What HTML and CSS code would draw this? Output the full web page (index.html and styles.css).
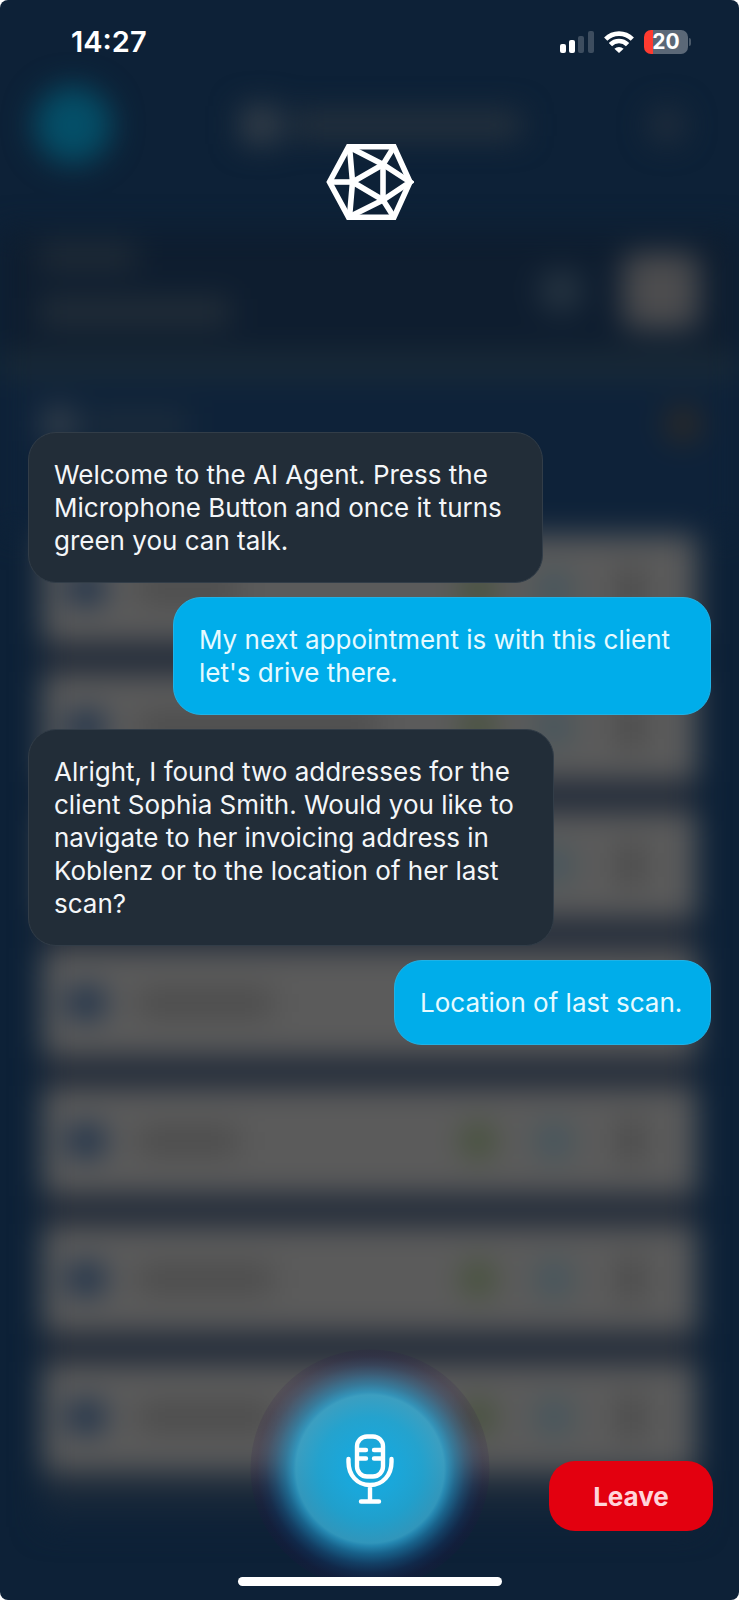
FILE: index.html
```html
<!DOCTYPE html>
<html lang="en">
<head>
<meta charset="utf-8">
<meta name="viewport" content="width=device-width, initial-scale=1">
<title>AI Agent</title>
<link rel="stylesheet" href="styles.css">
</head>
<body>
<div class="screen">
  <div class="backdrop" aria-hidden="true">
    <div class="backdrop-content">
      <div class="bg-header"><i class="bg-back"></i><div class="bg-title"><i></i><b></b></div><i class="bg-menu"></i></div>
      <div class="bg-client"><div class="bg-lines"><i></i><b></b></div><i class="bg-call"></i><i class="bg-tile"></i></div>
      <div class="bg-strip"></div>
      <div class="bg-tabs"><i class="bg-tab-icon"></i><i class="bg-tab-name"></i><i class="bg-badge"></i></div>
      <div class="bg-list">
        <div class="bg-card"><i class="doc"></i><i class="name"></i><i class="green"></i><i class="cyan"></i><i class="more"></i></div>
        <div class="bg-card"><i class="doc"></i><i class="name name-long"></i><i class="green"></i><i class="cyan"></i><i class="more"></i></div>
        <div class="bg-card"><i class="doc"></i><i class="name"></i><i class="green"></i><i class="cyan"></i><i class="more"></i></div>
        <div class="bg-card"><i class="doc"></i><i class="name name-mid"></i><i class="green"></i><i class="cyan"></i><i class="more"></i></div>
        <div class="bg-card"><i class="doc"></i><i class="name"></i><i class="green"></i><i class="cyan"></i><i class="more"></i></div>
        <div class="bg-card"><i class="doc"></i><i class="name name-mid"></i><i class="green"></i><i class="cyan"></i><i class="more"></i></div>
        <div class="bg-card"><i class="doc"></i><i class="name name-mid"></i><i class="green"></i><i class="cyan"></i><i class="more"></i></div>
      </div>
      <div class="bg-tail"></div>
    </div>
  </div>

  <header class="status-bar">
    <time class="clock">14:27</time>
    <div class="indicators">
      <svg class="signal" viewBox="0 0 34 22" role="img" aria-label="Signal: two of four bars">
        <rect x="0" y="13" width="6" height="9" rx="2" fill="#fff"/>
        <rect x="9" y="9" width="6" height="13" rx="2" fill="#fff"/>
        <rect x="18" y="5" width="6" height="17" rx="2" fill="#3d4d5f"/>
        <rect x="28" y="0" width="6" height="22" rx="2" fill="#3d4d5f"/>
      </svg>
      <svg class="wifi" viewBox="0 0 30 22" role="img" aria-label="Wi-Fi">
        <g fill="none" stroke="#fff" stroke-width="4.6">
          <path d="M1.7 8.1a19 19 0 0 1 26.6 0"/>
          <path d="M6.4 13.6a12 12 0 0 1 17.2 0"/>
        </g>
        <path d="M10.4 17.8a6.600 6.600 0 0 1 9.2 0L15 22z" fill="#fff"/>
      </svg>
      <div class="battery"><span class="battery-body">20</span><span class="battery-nub"></span></div>
    </div>
  </header>

  <svg class="logo" viewBox="0 0 88 76" role="img" aria-label="AI Agent logo">
    <g fill="none" stroke="#fff" stroke-width="5.600" stroke-linejoin="miter">
      <path d="M22.500 2.800H68L84 38 68 73.200H22.500L3.500 38z"/>
      <path d="M22.500 2.800L57 20.500 84 38 57 56 22.500 73.200"/>
      <path d="M68 2.800L57 20.500V56L68 73.200"/>
      <path d="M57 20.500L26.500 38 57 56"/>
      <path d="M23.500 2.800L26.500 38 23.500 73.200"/>
      <path d="M3.500 38H26.500"/>
    </g>
  </svg>

  <main class="chat">
    <p class="bubble agent first">Welcome to the AI Agent. Press the<br>Microphone Button and once it turns<br>green you can talk.</p>
    <p class="bubble user drive">My next appointment is with this client<br>let's drive there.</p>
    <p class="bubble agent second">Alright, I found two addresses for the<br>client Sophia Smith. Would you like to<br>navigate to her invoicing address in<br>Koblenz or to the location of her last<br>scan?</p>
    <p class="bubble user scan">Location of last scan.</p>
  </main>

  <footer class="controls">
    <button class="mic" type="button" aria-label="Microphone">
      <svg viewBox="0 0 48 70" aria-hidden="true">
        <g fill="none" stroke="#fff" stroke-width="4.400" stroke-linecap="round">
          <rect x="11" y="2.500" width="26" height="40" rx="10"/>
          <path d="M2.500 25V28C2.500 41 11 51 24 51S45.500 41 45.500 28V25M24 51V67.500M15 67.500H33"/>
          <path d="M13 16H20M28 16H35M13 24.500H20M28 24.500H35"/>
        </g>
      </svg>
    </button>
    <button class="leave" type="button">Leave</button>
  </footer>
  <div class="home-indicator"></div>
</div>
</body>
</html>
```

FILE: styles.css
```css
* { box-sizing: border-box; }

body {
  margin: 0;
  background: #fff;
  font-family: Inter, "Liberation Sans", sans-serif;
}

.screen {
  position: relative;
  display: flex;
  flex-direction: column;
  min-height: 100vh;
  overflow: hidden;
  border-radius: 8px;
  background: #0d2137;
  isolation: isolate;
}

/* Dimmed, blurred client list behind the conversation */
.backdrop {
  position: absolute;
  inset: 0;
  z-index: -1;
  overflow: hidden;
}
.backdrop-content { filter: blur(15px); }
.backdrop i, .backdrop b { display: block; flex: none; }

.bg-header {
  display: flex;
  align-items: center;
  justify-content: space-between;
  height: 230px;
  padding: 20px 54px 0 34px;
}
.bg-back { width: 78px; height: 78px; border-radius: 50%; background: #044f68; }
.bg-title { display: flex; align-items: center; gap: 12px; width: 280px; }
.bg-title i { width: 40px; height: 38px; background: #343e48; }
.bg-title b { flex: 1; height: 26px; background: #27323d; }
.bg-menu { width: 36px; height: 36px; border-radius: 50%; background: #222e3c; }

.bg-client {
  display: flex;
  align-items: center;
  gap: 40px;
  height: 122px;
  padding: 0 40px;
  background: #0e1d2f;
}
.bg-lines { flex: 1; display: grid; gap: 30px; padding-bottom: 12px; }
.bg-lines i { width: 96px; height: 24px; background: #222d37; }
.bg-lines b { width: 190px; height: 28px; background: #232e38; }
.bg-call { width: 44px; height: 44px; border-radius: 50%; background: #263441; }
.bg-tile { width: 76px; height: 76px; border-radius: 12px; background: #4c4c4e; }
.bg-strip { height: 26px; background: #1a2a37; }

.bg-tabs {
  display: flex;
  align-items: center;
  gap: 12px;
  height: 157px;
  padding: 0 38px 65px 42px;
  background: #0e2239;
}
.bg-tab-icon { width: 34px; height: 34px; background: #343f4a; }
.bg-tab-name { width: 100px; height: 24px; background: #1e2d3b; }
.bg-badge { width: 36px; height: 36px; margin-left: auto; border-radius: 50%; background: #2e2a26; }

.bg-list {
  display: grid;
  gap: 30px;
  margin: 0 42px;
  background: #1c2635;
}
.bg-card {
  display: flex;
  align-items: center;
  height: 108px;
  padding: 0 56px 0 26px;
  background: #5b5b5b;
}
.bg-card .doc { width: 36px; height: 30px; background: #1a2e48; }
.bg-card .name { width: 100px; height: 24px; margin: 0 auto 0 34px; background: #494949; }
.bg-card .name-mid { width: 134px; }
.bg-card .name-long { width: 240px; }
.bg-card .green { width: 34px; height: 34px; border-radius: 50%; background: #435036; }
.bg-card .cyan { width: 38px; height: 38px; margin-left: 40px; border-radius: 50%; background: #44555c; }
.bg-card .more { width: 20px; height: 44px; margin-left: 48px; background: #464646; }
.bg-tail {
  height: 56px;
  margin: 0 42px;
  background: linear-gradient(#232e3b, #0d2137);
}

/* Status bar */
.status-bar {
  display: flex;
  align-items: center;
  justify-content: space-between;
  height: 84px;
  padding: 0 48px 0 71px;
  color: #fff;
}
.clock { font-size: 29px; line-height: 34px; font-weight: 600; }
.indicators { display: flex; align-items: center; gap: 10px; }
.signal { width: 34px; height: 22px; }
.wifi { width: 30px; height: 22px; }
.battery { display: flex; align-items: center; gap: 1px; }
.battery-body {
  width: 44px;
  height: 24px;
  border-radius: 7px;
  background: linear-gradient(90deg, #ff3b30 9px, #5b6877 9px);
  font-size: 21px;
  line-height: 24px;
  font-weight: 700;
  text-align: center;
}
.battery-nub { width: 2px; height: 8px; border-radius: 0 2px 2px 0; background: #4a5969; }

.logo { width: 88px; height: 76px; margin: 60px auto 0; }

/* Conversation */
.chat {
  display: flex;
  flex-direction: column;
  gap: 14px;
  margin-top: 212px;
  padding: 0 28px;
}
.bubble {
  max-width: 100%;
  margin: 0;
  padding: 25px;
  border: 1px solid;
  border-radius: 28px;
  font-size: 26px;
  line-height: 33px;
}
.agent { align-self: flex-start; border-color: #323d48; background: #222d38; color: #f4f6f8; }
.user { align-self: flex-end; border-color: #20b2e6; background: #00adea; color: #e6faff; }
.first { width: 515px; }
.drive { width: 538px; }
.second { width: 526px; }
.scan { width: 317px; }

/* Bottom controls */
.controls {
  display: grid;
  grid-template-columns: 1fr 240px 1fr;
  align-items: center;
  margin-top: auto;
  padding: 0 26px;
}
button { border: 0; font: inherit; }
.mic {
  grid-column: 2;
  display: grid;
  place-items: center;
  height: 240px;
  padding: 0;
  border-radius: 50%;
  background: radial-gradient(circle,
    #14a8dc 0,
    #1aa7da 26px,
    rgba(33, 167, 213, 0.94) 52px,
    rgba(55, 170, 210, 0.85) 74px,
    rgba(42, 160, 207, 0.8) 77px,
    rgba(32, 145, 200, 0.58) 85px,
    rgba(30, 115, 180, 0.36) 95px,
    rgba(30, 65, 135, 0.23) 104px,
    rgba(40, 20, 80, 0.18) 113px,
    rgba(40, 15, 70, 0.13) 119px,
    transparent 120px);
}
.mic svg { width: 48px; height: 70px; }
.leave {
  grid-column: 3;
  justify-self: end;
  width: 164px;
  height: 70px;
  margin-top: 54px;
  border-radius: 26px;
  background: #e3000f;
  color: #ffd5da;
  font-size: 26px;
  line-height: 33px;
  font-weight: 700;
}
.home-indicator {
  width: 264px;
  height: 9px;
  margin: -12px auto 14px;
  border-radius: 5px;
  background: #fff;
  z-index: 1;
}
```
